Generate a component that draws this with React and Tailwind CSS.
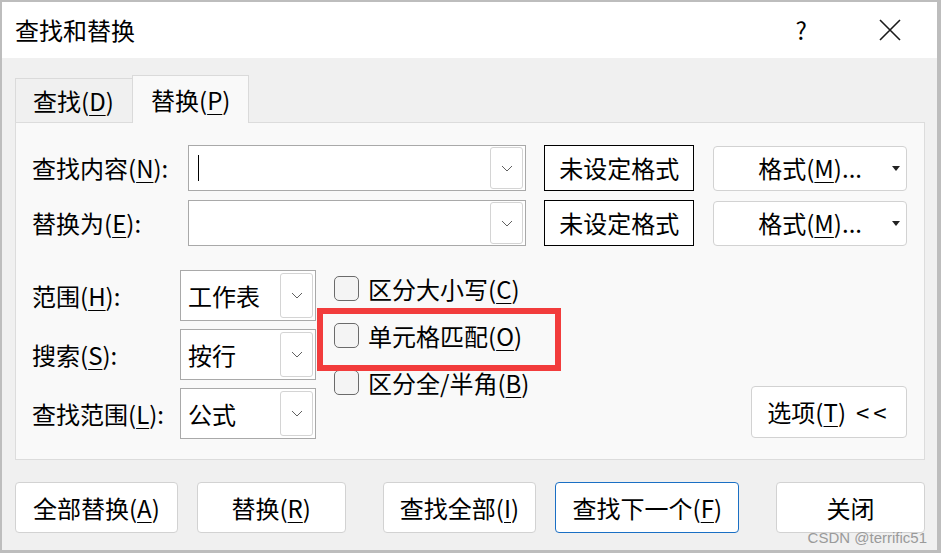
import React from "react";

const FONT = "font-['Microsoft_YaHei','Noto_Sans_CJK_SC','Noto_Sans',sans-serif]";

function Chevron() {
  return (
    <svg width="12" height="7" viewBox="0 0 12 7">
      <path d="M1 1l5 5 5-5" fill="none" stroke="#606060" strokeWidth="1" />
    </svg>
  );
}

function U({ children }) {
  return <span className="underline decoration-1 underline-offset-[4px]">{children}</span>;
}

function TopCombo({ cursor }) {
  return (
    <div className="flex h-[46px] w-[339px] border border-[#a9a9a9] bg-white p-[1px] pr-[2px]">
      <div className="flex flex-1 items-center pl-[8px]">
        {cursor && <div className="h-[26px] w-[1px] bg-black" />}
      </div>
      <div className="flex w-[33px] items-center justify-center rounded-[3px] border border-[#d4d4d4] bg-white">
        <Chevron />
      </div>
    </div>
  );
}

function SmallCombo({ text }) {
  return (
    <div className="flex h-[51px] w-[136px] border border-[#a9a9a9] bg-white py-[2px] pr-[2px]">
      <div className="flex flex-1 items-center pl-[7px] text-[24px] text-black">{text}</div>
      <div className="flex w-[33px] items-center justify-center rounded-[3px] border border-[#d4d4d4] bg-white">
        <Chevron />
      </div>
    </div>
  );
}

function Checkbox({ children }) {
  return (
    <div className="flex h-[25px] items-center">
      <div className="h-[25px] w-[25px] rounded-[5px] border-[1.5px] border-[#6b6b6b] bg-[#f4f4f4]" />
      <span className="ml-[9px] text-[24px] leading-none text-black">{children}</span>
    </div>
  );
}

function Btn({ w, blue, children, className = "" }) {
  return (
    <div
      className={`flex h-[51px] items-center justify-center rounded-[4px] border bg-white text-[24px] text-black ${
        blue ? "border-[#1a6fc4]" : "border-[#d2d2d2]"
      } ${className}`}
      style={{ width: w }}
    >
      {children}
    </div>
  );
}

export default function App() {
  return (
    <div className={`relative h-[553px] w-[941px] bg-[#bdbdbd] pl-[2px] pt-[2px] pr-[4px] pb-[3px] ${FONT}`}>
      <div className="flex h-full w-full flex-col bg-[#f0f0f0]">
        {/* Title bar */}
        <div className="flex h-[56px] items-center bg-white pl-[13px] pr-[35px]">
          <span className="text-[24px] leading-none text-black">查找和替换</span>
          <span className="ml-auto mr-[71px] text-[24px] leading-none text-black">?</span>
          <svg width="24" height="24" viewBox="0 0 24 24">
            <path d="M2 2L22 22M22 2L2 22" stroke="#1a1a1a" strokeWidth="1.6" fill="none" />
          </svg>
        </div>

        {/* Body */}
        <div className="flex flex-1 flex-col pl-[13px] pr-[12px] pt-[17px]">
          {/* Tabs */}
          <div className="flex items-end">
            <div className="flex h-[44px] w-[117px] items-center border-l border-t border-[#dadada] bg-[#f0f0f0] pl-[17px] text-[24px] text-black">
              查找(<U>D</U>)
            </div>
            <div className="relative z-10 -mb-px flex h-[48px] w-[117px] items-center border-x border-t border-[#dadada] bg-[#f9f9f9] pl-[18px] text-[24px] text-black">
              替换(<U>P</U>)
            </div>
          </div>

          {/* Panel */}
          <div className="relative flex h-[338px] flex-col border border-[#dcdcdc] bg-[#f9f9f9] pl-[16px] pr-[17px] pt-[22px]">
            <div className="flex flex-col gap-[9px]">
              <div className="flex items-center">
                <span className="w-[156px] text-[24px] text-black">
                  查找内容(<U>N</U>):
                </span>
                <TopCombo cursor />
                <div className="ml-[18px] flex h-[46px] w-[150px] items-center justify-center border border-black bg-white text-[24px] text-black">
                  未设定格式
                </div>
                <div className="relative ml-[19px] flex h-[45px] w-[194px] items-center justify-center rounded-[4px] border border-[#d2d2d2] bg-white text-[24px] text-black">
                  格式(<U>M</U>)...
                  <svg className="absolute right-[6px] top-[19px]" width="8" height="5" viewBox="0 0 8 5">
                    <path d="M0 0h8L4 5z" fill="#222" />
                  </svg>
                </div>
              </div>
              <div className="flex items-center">
                <span className="w-[156px] text-[24px] text-black">
                  替换为(<U>E</U>):
                </span>
                <TopCombo />
                <div className="ml-[18px] flex h-[46px] w-[150px] items-center justify-center border border-black bg-white text-[24px] text-black">
                  未设定格式
                </div>
                <div className="relative ml-[19px] flex h-[45px] w-[194px] items-center justify-center rounded-[4px] border border-[#d2d2d2] bg-white text-[24px] text-black">
                  格式(<U>M</U>)...
                  <svg className="absolute right-[6px] top-[19px]" width="8" height="5" viewBox="0 0 8 5">
                    <path d="M0 0h8L4 5z" fill="#222" />
                  </svg>
                </div>
              </div>
            </div>

            <div className="mt-[24px] flex">
              <div className="flex flex-col gap-[8px]">
                <div className="flex items-center">
                  <span className="w-[148px] text-[24px] text-black">
                    范围(<U>H</U>):
                  </span>
                  <SmallCombo text="工作表" />
                </div>
                <div className="flex items-center">
                  <span className="w-[148px] text-[24px] text-black">
                    搜索(<U>S</U>):
                  </span>
                  <SmallCombo text="按行" />
                </div>
                <div className="flex items-center">
                  <span className="w-[148px] text-[24px] text-black">
                    查找范围(<U>L</U>):
                  </span>
                  <SmallCombo text="公式" />
                </div>
              </div>

              <div className="ml-[18px] mt-[6px] flex flex-col gap-[22px]">
                <Checkbox>
                  区分大小写(<U>C</U>)
                </Checkbox>
                <Checkbox>
                  单元格匹配(<U>O</U>)
                </Checkbox>
                <Checkbox>
                  区分全/半角(<U>B</U>)
                </Checkbox>
              </div>

              <div className="ml-auto flex items-end pb-[1px]">
                <div className="flex h-[52px] w-[156px] items-center justify-center rounded-[4px] border border-[#d2d2d2] bg-white text-[24px] text-black">
                  选项(<U>T</U>)<span className="ml-[10px] tracking-[4px]">&lt;&lt;</span>
                </div>
              </div>
            </div>

            {/* red annotation box */}
            <div className="absolute left-[301px] top-[185px] h-[63px] w-[244px] border-[6px] border-[#f23c3c]" />
          </div>

          {/* Bottom buttons */}
          <div className="mt-[22px] flex">
            <Btn w={163}>
              全部替换(<U>A</U>)
            </Btn>
            <Btn w={149} className="ml-[19px]">
              替换(<U>R</U>)
            </Btn>
            <Btn w={154} className="ml-[37px]">
              查找全部(<U>I</U>)
            </Btn>
            <Btn w={184} blue className="ml-[19px]">
              查找下一个(<U>F</U>)
            </Btn>
            <Btn w={149} className="ml-[37px]">
              关闭
            </Btn>
          </div>
        </div>
      </div>
      <div className="absolute bottom-[8px] right-[14px] font-['Liberation_Sans',sans-serif] text-[15px] leading-none text-[#9a9a9a]">
        CSDN @terrific51
      </div>
    </div>
  );
}
